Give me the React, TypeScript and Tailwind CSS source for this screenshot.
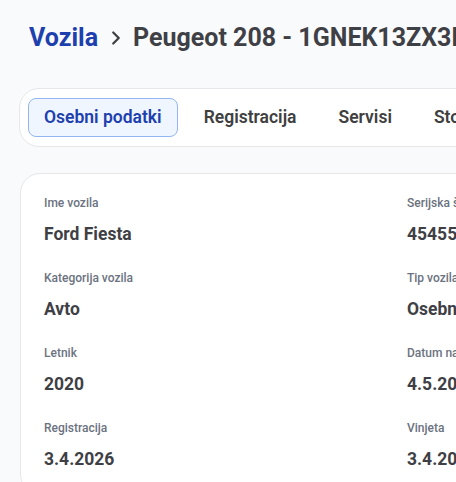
import React from "react";
import { ChevronRight } from "lucide-react";

const rows: [string, string, string, string][] = [
  ["Ime vozila", "Ford Fiesta", "Serijska številka", "45455688"],
  ["Kategorija vozila", "Avto", "Tip vozila", "Osebno vozilo"],
  ["Letnik", "2020", "Datum nakupa", "4.5.2020"],
  ["Registracija", "3.4.2026", "Vinjeta", "3.4.2026"],
];

export default function App() {
  return (
    <div
      className="w-[456px] h-[482px] overflow-hidden bg-[#f9fafb]"
      style={{ fontFamily: "Roboto, 'Noto Sans', sans-serif" }}
    >
      <div className="w-[900px] pl-5 pt-[22px]">
        <div className="flex items-center h-8 pl-[9px] text-[25px] font-bold whitespace-nowrap">
          <span className="text-[#1e40af]">Vozila</span>
          <ChevronRight className="ml-[7px] mr-[6px] text-[#404040]" size={22} strokeWidth={2.5} />
          <span className="text-[#3f3f46]">Peugeot 208 - 1GNEK13ZX3R298984</span>
        </div>

        <div className="mt-[34px] -ml-px flex items-center gap-[10px] px-2 py-[9px] border border-[#e5e7eb] rounded-[20px] bg-white w-[700px]">
          <div className="h-[39px] flex items-center px-[15px] rounded-lg border border-[#93b6f0] bg-[#eff6ff] text-[#1e40af] text-[17.5px] font-semibold whitespace-nowrap">
            Osebni podatki
          </div>
          {["Registracija", "Servisi", "Storitve"].map((t) => (
            <div
              key={t}
              className="h-[39px] flex items-center px-4 rounded-lg text-[#404040] text-[17.5px] font-semibold whitespace-nowrap"
            >
              {t}
            </div>
          ))}
        </div>

        <div className="mt-[26px] border border-[#e5e7eb] rounded-[20px] bg-white w-[800px] pl-[23px] pt-[19px]">
          {rows.map(([l1, v1, l2, v2]) => (
            <div key={l1} className="grid grid-cols-[363px_1fr] h-[75px]">
              <div>
                <div className="text-xs font-medium text-[#6b7280] leading-5">{l1}</div>
                <div className="mt-[7px] text-[17.5px] font-bold text-[#3f3f46] leading-7">{v1}</div>
              </div>
              <div>
                <div className="text-xs font-medium text-[#6b7280] leading-5">{l2}</div>
                <div className="mt-[7px] text-[17.5px] font-bold text-[#3f3f46] leading-7">{v2}</div>
              </div>
            </div>
          ))}
        </div>
      </div>
    </div>
  );
}
